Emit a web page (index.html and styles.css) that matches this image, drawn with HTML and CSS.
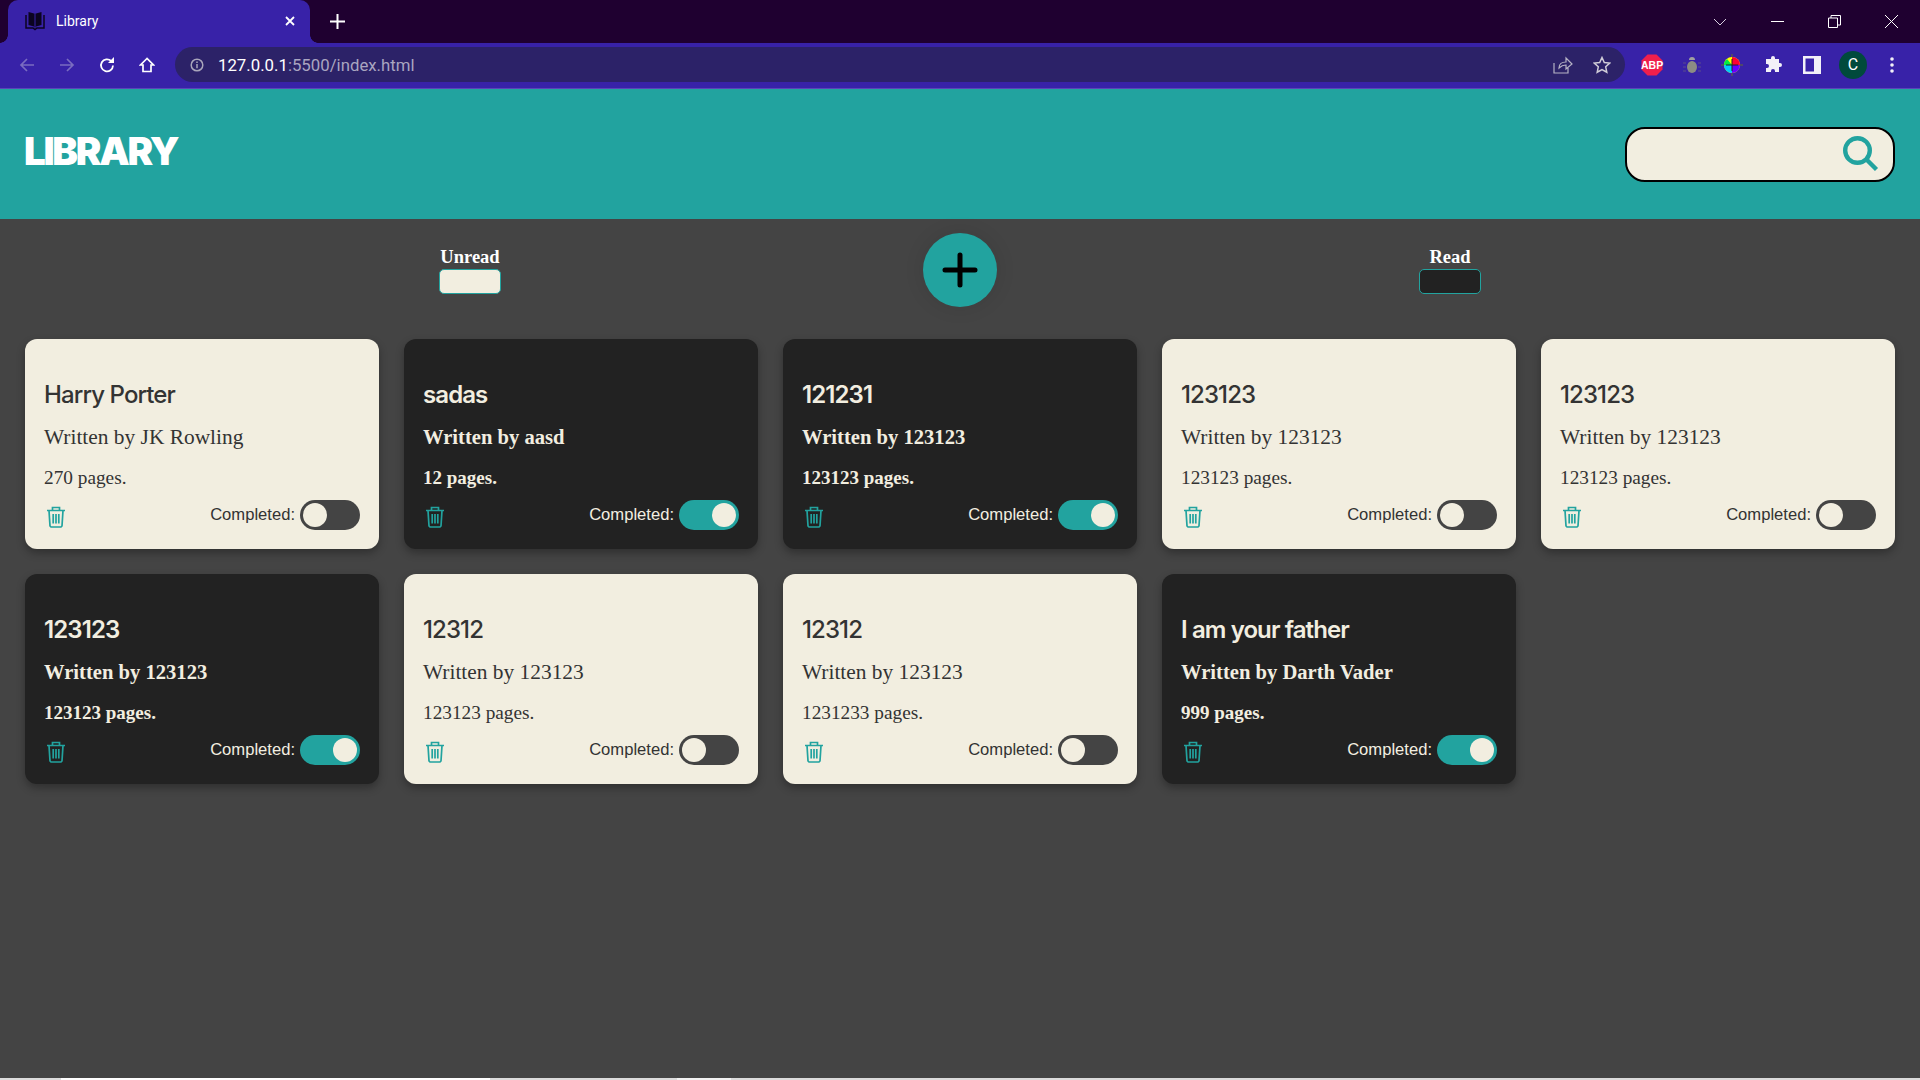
FILE: index.html
```html
<!DOCTYPE html>
<html lang="en">
<head>
    <meta charset="UTF-8">
    <meta name="viewport" content="width=device-width, initial-scale=1.0">
    <title>Library</title>
    <link rel="stylesheet" href="styles.css">
</head>
<body>
    <!-- Browser chrome -->
    <div class="tab-strip">
        <div class="tab">
            <svg class="tab-icon" viewBox="0 0 20 20" width="20" height="20"><path d="M3.500 1l5.500 1.500v13L3.500 14zM16.500 1L11 2.500v13l5.500-1.500z" fill="#0b0420"/><path d="M1 4v13h7l2 1.500 2-1.500h7V4" fill="none" stroke="#0b0420" stroke-width="1.500"/><path d="M10 2.500v14" stroke="#0b0420" stroke-width="1"/></svg>
            <span class="tab-title">Library</span>
            <svg class="tab-close" viewBox="0 0 10 10" width="10" height="10"><path d="M1 1l8 8M9 1l-8 8" stroke="#fff" stroke-width="1.800"/></svg>
        </div>
        <svg class="new-tab" viewBox="0 0 15 15" width="15" height="15"><path d="M7.500 0v15M0 7.500h15" stroke="#fff" stroke-width="2"/></svg>
        <div class="window-controls">
            <svg viewBox="0 0 14 8" width="14" height="8"><path d="M1 1l6 6 6-6" fill="none" stroke="#d8d0e0" stroke-width="1"/></svg>
            <svg viewBox="0 0 13 13" width="13" height="13"><path d="M0 6.500h13" stroke="#fff" stroke-width="1"/></svg>
            <svg viewBox="0 0 13 13" width="13" height="13"><path d="M.5 3h9v9.500h-9zM3 3V.5h9.500V10H10" fill="none" stroke="#fff" stroke-width="1"/></svg>
            <svg viewBox="0 0 13 13" width="13" height="13"><path d="M0 0l13 13M13 0L0 13" stroke="#fff" stroke-width="1"/></svg>
        </div>
    </div>
    <div class="toolbar">
        <svg class="tool-icon" viewBox="0 0 16 16" width="16" height="16"><path d="M15 8H2M8 2L2 8l6 6" fill="none" stroke="#7a6cc0" stroke-width="1.700"/></svg>
        <svg class="tool-icon" viewBox="0 0 16 16" width="16" height="16"><path d="M1 8h13M8 2l6 6-6 6" fill="none" stroke="#7a6cc0" stroke-width="1.700"/></svg>
        <svg class="tool-icon" viewBox="0 0 16 16" width="16" height="16"><path d="M14 8.500A6 6 0 1 1 12.200 4" fill="none" stroke="#fff" stroke-width="1.800"/><path d="M9 6h6V0z" fill="#fff"/></svg>
        <svg class="tool-icon" viewBox="0 0 16 16" width="16" height="16"><path d="M8 1.500L1.500 8H4v6.500h8V8h2.500z" fill="none" stroke="#fff" stroke-width="1.700"/></svg>
        <div class="omnibox">
            <svg viewBox="0 0 14 14" width="14" height="14"><circle cx="7" cy="7" r="5.800" fill="none" stroke="#a9a5bb" stroke-width="1.500"/><path d="M7 6v4.200M7 3.600v1.300" stroke="#a9a5bb" stroke-width="1.500"/></svg>
            <span class="url"><span class="url-host">127.0.0.1</span>:5500/index.html</span>
            <svg class="omni-end" viewBox="0 0 20 18" width="20" height="18"><path d="M1 7v10h14v-5M6 12c0-4 3-6 7-6V2l6 6-6 5V9c-3 0-5 1-7 3z" fill="none" stroke="#b5b2c4" stroke-width="1.200"/></svg>
            <svg class="omni-star" viewBox="0 0 18 18" width="18" height="18"><path d="M9 1.500l2.300 5 5.400.6-4 3.700 1.100 5.400L9 13.500l-4.800 2.700 1.100-5.400-4-3.700 5.400-.6z" fill="none" stroke="#d0cdd8" stroke-width="1.500"/></svg>
        </div>
        <div class="extensions">
            <svg viewBox="0 0 22 22" width="22" height="22"><path d="M6.500 0.500h9l6 6v9l-6 6h-9l-6-6v-9z" fill="#f01f4c"/></svg>
            <span class="abp">ABP</span>
            <svg class="bug" viewBox="0 0 18 18" width="18" height="18"><path d="M6 4a3 3 0 0 1 6 0z" fill="#a0a0a0"/><ellipse cx="9" cy="11" rx="5" ry="6" fill="#8c8c84"/><path d="M0 7h3M0 11h3M0 15h3M15 7h3M15 11h3M15 15h3" stroke="#5a4d8c" stroke-width="1"/></svg>
            <svg class="wheel" viewBox="0 0 22 22" width="22" height="22"><path d="M11 0v22M0 11h22" stroke="#555" stroke-width="1.500"/><circle cx="11" cy="11" r="8" fill="#ff0"/><path d="M11 11V3a8 8 0 0 1 8 8z" fill="#f03"/><path d="M11 11h8a8 8 0 0 1-8 8z" fill="#60f"/><path d="M11 11v8a8 8 0 0 1-8-8z" fill="#0cf"/><path d="M11 11H3a8 8 0 0 1 3-6z" fill="#0e4"/><path d="M11 5v12M5 11h12" stroke="#222" stroke-width="1"/></svg>
            <svg class="puzzle" viewBox="0 0 18 18" width="18" height="18"><path d="M7 2a2 2 0 0 1 4 0l0 1h4v4h1a2 2 0 0 1 0 4h-1v5h-4v-1a2 2 0 0 0-4 0v1H2v-4h1a2 2 0 0 0 0-4H2V3h5z" fill="#f2f1f8"/></svg>
            <svg class="panel" viewBox="0 0 18 18" width="18" height="18"><path d="M0 0h18v18H0z" fill="#f2f1f8"/><path d="M2.500 2.500h8.500v13H2.500z" fill="#3822a8"/></svg>
            <span class="avatar">C</span>
            <svg class="dots" viewBox="0 0 4 16" width="4" height="16"><circle cx="2" cy="2" r="1.800" fill="#f2f1f8"/><circle cx="2" cy="8" r="1.800" fill="#f2f1f8"/><circle cx="2" cy="14" r="1.800" fill="#f2f1f8"/></svg>
        </div>
    </div>

    <!-- Page -->
    <header class="header">
        <h1>LIBRARY</h1>
        <div class="search">
            <svg viewBox="0 0 36 36" width="36" height="36"><circle cx="14.500" cy="14.500" r="12.300" fill="none" stroke="#22a39f" stroke-width="4.400"/><path d="M23.500 23.500l10 10" stroke="#22a39f" stroke-width="4.400"/></svg>
        </div>
    </header>

    <div class="controls">
        <div class="legend">
            <span>Unread</span>
            <div class="swatch swatch-light"></div>
        </div>
        <button class="add-button">
            <svg viewBox="0 0 36 36" width="36" height="36"><path d="M18 3v30M3 18h30" stroke="#000" stroke-width="5" stroke-linecap="round"/></svg>
        </button>
        <div class="legend">
            <span>Read</span>
            <div class="swatch swatch-dark"></div>
        </div>
    </div>

    <main class="books">
        <div class="card light">
            <h2>Harry Porter</h2>
            <p class="author">Written by JK Rowling</p>
            <p class="pages">270 pages.</p>
            <div class="card-foot">
                <svg class="trash" viewBox="0 0 20 22"><use href="#trash"/></svg>
                <span class="done">Completed:</span><span class="toggle"></span>
            </div>
        </div>
        <div class="card dark">
            <h2>sadas</h2>
            <p class="author">Written by aasd</p>
            <p class="pages">12 pages.</p>
            <div class="card-foot">
                <svg class="trash" viewBox="0 0 20 22"><use href="#trash"/></svg>
                <span class="done">Completed:</span><span class="toggle on"></span>
            </div>
        </div>
        <div class="card dark">
            <h2>121231</h2>
            <p class="author">Written by 123123</p>
            <p class="pages">123123 pages.</p>
            <div class="card-foot">
                <svg class="trash" viewBox="0 0 20 22"><use href="#trash"/></svg>
                <span class="done">Completed:</span><span class="toggle on"></span>
            </div>
        </div>
        <div class="card light">
            <h2>123123</h2>
            <p class="author">Written by 123123</p>
            <p class="pages">123123 pages.</p>
            <div class="card-foot">
                <svg class="trash" viewBox="0 0 20 22"><use href="#trash"/></svg>
                <span class="done">Completed:</span><span class="toggle"></span>
            </div>
        </div>
        <div class="card light">
            <h2>123123</h2>
            <p class="author">Written by 123123</p>
            <p class="pages">123123 pages.</p>
            <div class="card-foot">
                <svg class="trash" viewBox="0 0 20 22"><use href="#trash"/></svg>
                <span class="done">Completed:</span><span class="toggle"></span>
            </div>
        </div>
        <div class="card dark">
            <h2>123123</h2>
            <p class="author">Written by 123123</p>
            <p class="pages">123123 pages.</p>
            <div class="card-foot">
                <svg class="trash" viewBox="0 0 20 22"><use href="#trash"/></svg>
                <span class="done">Completed:</span><span class="toggle on"></span>
            </div>
        </div>
        <div class="card light">
            <h2>12312</h2>
            <p class="author">Written by 123123</p>
            <p class="pages">123123 pages.</p>
            <div class="card-foot">
                <svg class="trash" viewBox="0 0 20 22"><use href="#trash"/></svg>
                <span class="done">Completed:</span><span class="toggle"></span>
            </div>
        </div>
        <div class="card light">
            <h2>12312</h2>
            <p class="author">Written by 123123</p>
            <p class="pages">1231233 pages.</p>
            <div class="card-foot">
                <svg class="trash" viewBox="0 0 20 22"><use href="#trash"/></svg>
                <span class="done">Completed:</span><span class="toggle"></span>
            </div>
        </div>
        <div class="card dark">
            <h2>I am your father</h2>
            <p class="author">Written by Darth Vader</p>
            <p class="pages">999 pages.</p>
            <div class="card-foot">
                <svg class="trash" viewBox="0 0 20 22"><use href="#trash"/></svg>
                <span class="done">Completed:</span><span class="toggle on"></span>
            </div>
        </div>
    </main>
    <div class="taskbar-edge"></div>

    <svg class="icon-defs" width="0" height="0">
        <symbol id="trash" viewBox="0 0 20 22">
            <path d="M1 4.500h18M6.500 4.500V1.500h7v3M3 4.500l1 15.500 1 1h10l1-1 1-15.500M7.200 8v9.500M10 8v9.500M12.800 8v9.500" fill="none" stroke="currentColor" stroke-width="1.700"/>
        </symbol>
    </svg>
</body>
</html>
```

FILE: styles.css
```css
* {
    box-sizing: border-box;
}
body {
    margin: 0;
    height: 1080px;
    overflow: hidden;
    display: flex;
    flex-direction: column;
    background-color: #444444;
    font-family: 'Liberation Sans', sans-serif;
}
.icon-defs {
    position: absolute;
}

/* browser chrome */
.tab-strip {
    height: 43px;
    flex: none;
    display: flex;
    align-items: center;
    background-color: #1f0030;
    padding-left: 8px;
}
.tab {
    position: relative;
    width: 302px;
    height: 43px;
    display: flex;
    align-items: center;
    padding: 0 15px 1px 17px;
    background-color: #3822a8;
    border-radius: 10px 10px 0 0;
}
.tab::before, .tab::after {
    content: "";
    position: absolute;
    bottom: 0;
    width: 8px;
    height: 8px;
}
.tab::before {
    left: -8px;
    background: radial-gradient(circle at 0 0, #1f0030 7.500px, #3822a8 8px);
}
.tab::after {
    right: -8px;
    background: radial-gradient(circle at 100% 0, #1f0030 7.500px, #3822a8 8px);
}
.tab-icon {
    margin-right: 11px;
}
.tab-title {
    flex: 1;
    color: #fff;
    font-family: 'Roboto', sans-serif;
    font-size: 14px;
}
.new-tab {
    margin-left: 20px;
}
.window-controls {
    margin-left: auto;
    padding-right: 22px;
    display: flex;
    align-items: center;
    gap: 44px;
}
.toolbar {
    height: 46px;
    flex: none;
    display: flex;
    align-items: center;
    padding: 0 0 2px 19px;
    gap: 24px;
    background-color: #3822a8;
    border-bottom: 1px solid #5a46b8;
}
.omnibox {
    width: 1450px;
    height: 35px;
    margin-left: -4px;
    padding: 0 14px 0 15px;
    display: flex;
    align-items: center;
    background-color: #2c2268;
    border-radius: 18px;
}
.url {
    margin-left: 14px;
    flex: 1;
    color: #a9a5c0;
    font-family: 'Roboto', sans-serif;
    font-size: 16.800px;
}
.url-host {
    color: #fff;
}
.omni-star {
    margin-left: 20px;
}
.extensions {
    display: flex;
    align-items: center;
    margin-left: -8px;
    position: relative;
}
.abp {
    position: absolute;
    left: 0;
    top: 3px;
    width: 22px;
    line-height: 22px;
    text-align: center;
    font-size: 10.500px;
    font-weight: bold;
    color: #fff;
}
.bug {
    margin-left: 20px;
}
.wheel {
    margin-left: 20px;
}
.puzzle {
    margin-left: 21px;
}
.panel {
    margin-left: 21px;
}
.avatar {
    width: 28px;
    height: 28px;
    margin-left: 18px;
    display: flex;
    align-items: center;
    justify-content: center;
    border-radius: 50%;
    background-color: #004a3c;
    color: #fff;
    font-family: 'Roboto', sans-serif;
    font-size: 16px;
}
.dots {
    margin-left: 23px;
}

/* header */
.header {
    height: 130px;
    flex: none;
    display: flex;
    align-items: center;
    justify-content: space-between;
    padding: 0 25px 0 24px;
    background-color: #22a39f;
}
h1 {
    margin: 0 0 6px;
    color: #fff;
    font-family: 'Inter', sans-serif;
    font-size: 38.500px;
    font-weight: 900;
    letter-spacing: -2.300px;
}
.search {
    width: 270px;
    height: 55px;
    padding-right: 14px;
    display: flex;
    align-items: center;
    justify-content: flex-end;
    background-color: #f2eee0;
    border: 2px solid #000;
    border-radius: 20px;
}

/* unread / add / read */
.controls {
    height: 120px;
    flex: none;
    display: flex;
    justify-content: center;
    align-items: center;
    gap: 422px;
    padding-bottom: 20px;
}
.legend {
    display: flex;
    flex-direction: column;
    align-items: center;
    padding-top: 3px;
    color: #fff;
    font-family: 'Liberation Serif', serif;
    font-size: 18.500px;
    font-weight: bold;
}
.swatch {
    width: 62px;
    height: 25px;
    margin-top: 1px;
    border: 1px solid #22a39f;
    border-radius: 5px;
}
.swatch-light {
    background-color: #f2eee0;
}
.swatch-dark {
    background-color: #222222;
}
.add-button {
    width: 74px;
    height: 74px;
    margin-top: 1px;
    padding: 0;
    display: flex;
    align-items: center;
    justify-content: center;
    background-color: #22a39f;
    border: none;
    border-radius: 50%;
    box-shadow: 0 0 20px rgba(0, 0, 0, 0.1);
}

/* cards */
.books {
    flex: 1;
    display: grid;
    grid-template-columns: repeat(5, 354px);
    grid-auto-rows: 210px;
    gap: 25px;
    padding: 0 25px;
}
.card {
    padding: 41px 19px 0;
    border-radius: 12px;
    box-shadow: 0 4px 8px rgba(0, 0, 0, 0.3);
}
.light {
    background-color: #f2eee0;
    color: #333333;
}
.dark {
    background-color: #222222;
    color: #f2eee0;
}
.card h2 {
    margin: 0;
    height: 30px;
    font-family: 'Inter', sans-serif;
    font-size: 24px;
    line-height: 30px;
    font-weight: 500;
    letter-spacing: -0.900px;
}
.dark h2 {
    font-weight: 600;
}
.author {
    margin: 13px 0 0;
    height: 28px;
    font-family: 'Liberation Serif', serif;
    font-size: 21.400px;
    line-height: 28px;
}
.pages {
    margin: 15px 0 0;
    height: 24px;
    font-family: 'Liberation Serif', serif;
    font-size: 19.300px;
    line-height: 24px;
}
.dark .author {
    font-size: 20.600px;
    font-weight: bold;
}
.dark .pages {
    font-size: 19px;
    font-weight: bold;
}
.card-foot {
    display: flex;
    align-items: center;
    margin-top: 10px;
}
.trash {
    width: 20px;
    height: 22px;
    margin: 3px auto 0 2px;
    color: #22a39f;
}
.done {
    font-size: 16.600px;
    margin-right: 5px;
}
.toggle {
    width: 60px;
    height: 30px;
    padding: 3px;
    display: flex;
    border-radius: 15px;
    background-color: #444444;
}
.toggle::after {
    content: "";
    width: 24px;
    height: 24px;
    border-radius: 50%;
    background-color: #f2eee0;
}
.toggle.on {
    justify-content: flex-end;
    background-color: #22a39f;
}
.taskbar-edge {
    height: 2px;
    flex: none;
    background: linear-gradient(to right, #dcdcdc 61px, #ffffff 61px, #ffffff 490px, #dcdcdc 490px, #dcdcdc 677px, #f2f2f2 677px, #f2f2f2 731px, #dcdcdc 731px);
}
```
